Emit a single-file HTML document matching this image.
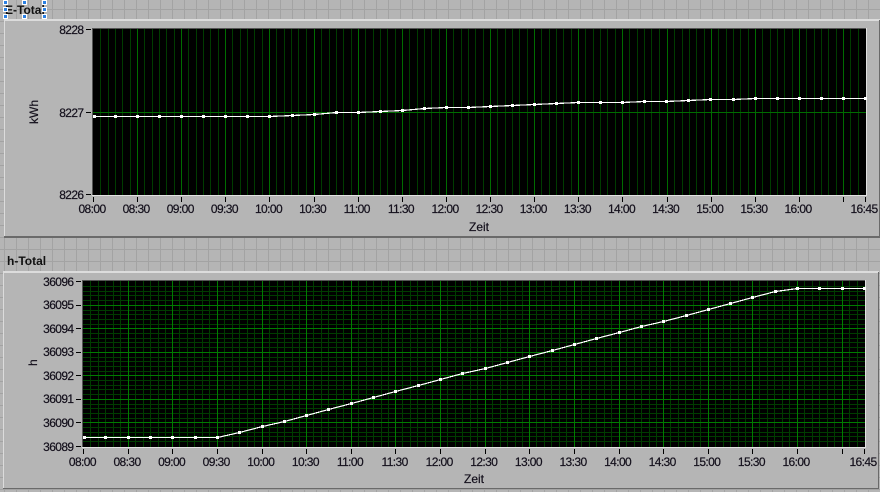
<!DOCTYPE html>
<html><head><meta charset="utf-8"><title>E-Total / h-Total</title>
<style>
html,body{margin:0;padding:0;width:880px;height:492px;overflow:hidden;background:#b5b5b5}
svg{display:block}
text{font-family:"Liberation Sans",sans-serif;font-size:12px;letter-spacing:-.6px;fill:#14101c;stroke:#14101c;stroke-width:.2px}
.z{letter-spacing:0}
.b{font-weight:bold;font-size:12px;letter-spacing:0;fill:#111;stroke:none}
.m{text-anchor:middle}.e{text-anchor:end}
.c{shape-rendering:crispEdges}
</style></head><body>
<svg width="880" height="492" viewBox="0 0 880 492" xmlns="http://www.w3.org/2000/svg">
<defs>
<pattern id="bg" width="12" height="12" patternUnits="userSpaceOnUse" x="4" y="9">
<rect width="12" height="12" fill="#b5b5b5"/><path d="M.5 0V12M0 .5H12" stroke="#a3a3a3" fill="none"/>
</pattern>
<path id="v1" class="c" fill="none" stroke="#003c00" d="M7.5 29V195M15.5 29V195M22.5 29V195M29.5 29V195M37.5 29V195"/>
<path id="v2" class="c" fill="none" stroke="#003c00" d="M7.5 281V447M15.5 281V447M22.5 281V447M30.5 281V447M37.5 281V447"/>
</defs>
<rect width="880" height="492" fill="url(#bg)"/>

<!-- top panel -->
<g class="c">
<rect x="4" y="19" width="876" height="218" fill="#b5b5b5"/>
<rect x="4" y="19" width="876" height="2" fill="#dcdcdc"/>
<rect x="4" y="19" width="1" height="218" fill="#dcdcdc"/>
<rect x="4" y="236" width="876" height="2" fill="#6a6a6a"/>
<rect x="879" y="20" width="1" height="218" fill="#6a6a6a"/>
<rect x="92" y="28" width="775" height="168" fill="#e2e2e2"/>
<rect x="92" y="28" width="774" height="167" fill="#555"/>
<rect x="93" y="29" width="773" height="166" fill="#000"/>
</g>
<use href="#v1" x="93"/><use href="#v1" x="137"/><use href="#v1" x="181"/><use href="#v1" x="225"/><use href="#v1" x="269"/><use href="#v1" x="314"/><use href="#v1" x="358"/><use href="#v1" x="402"/><use href="#v1" x="446"/><use href="#v1" x="490"/><use href="#v1" x="534"/><use href="#v1" x="578"/><use href="#v1" x="622"/><use href="#v1" x="667"/><use href="#v1" x="711"/><use href="#v1" x="755"/><use href="#v1" x="799"/>
<path class="c" fill="none" stroke="#003c00" d="M850.5 29V195M858.5 29V195"/>
<path class="c" fill="none" stroke="#006c00" d="M137.5 29V195M181.5 29V195M225.5 29V195M269.5 29V195M314.5 29V195M358.5 29V195M402.5 29V195M446.5 29V195M490.5 29V195M534.5 29V195M578.5 29V195M622.5 29V195M667.5 29V195M711.5 29V195M755.5 29V195M799.5 29V195M843.5 29V195M93 112.5H866"/>
<polyline class="c" fill="none" stroke="#fff" stroke-width="1.2" points="94.5,116.5 269.5,116.5 292.5,115.5 314.5,114.5 336.5,112.5 358.5,112.5 380.5,111.5 402.5,110.5 424.5,108.5 446.5,107.5 468.5,107.5 490.5,106.5 512.5,105.5 534.5,104.5 556.5,103.5 578.5,102.5 622.5,102.5 644.5,101.5 666.5,101.5 688.5,100.5 710.5,99.5 733.5,99.5 755.5,98.5 865.5,98.5"/>
<path class="c" fill="none" stroke="#fff" stroke-width="3" stroke-linecap="square" d="M94.5 116.5h.01M115.5 116.5h.01M137.5 116.5h.01M159.5 116.5h.01M181.5 116.5h.01M203.5 116.5h.01M225.5 116.5h.01M247.5 116.5h.01M269.5 116.5h.01M292.5 115.5h.01M314.5 114.5h.01M336.5 112.5h.01M358.5 112.5h.01M380.5 111.5h.01M402.5 110.5h.01M424.5 108.5h.01M446.5 107.5h.01M468.5 107.5h.01M490.5 106.5h.01M512.5 105.5h.01M534.5 104.5h.01M556.5 103.5h.01M578.5 102.5h.01M600.5 102.5h.01M622.5 102.5h.01M644.5 101.5h.01M666.5 101.5h.01M688.5 100.5h.01M710.5 99.5h.01M733.5 99.5h.01M755.5 98.5h.01M777.5 98.5h.01M799.5 98.5h.01M821.5 98.5h.01M843.5 98.5h.01M865.5 98.5h.01"/>
<!-- top ticks -->
<path class="c" fill="none" stroke="#000" d="M86 29.5H91M86 112.5H91M86 194.5H91M93.5 197V202M137.5 197V202M181.5 197V202M225.5 197V202M269.5 197V202M314.5 197V202M358.5 197V202M402.5 197V202M446.5 197V202M490.5 197V202M534.5 197V202M578.5 197V202M622.5 197V202M667.5 197V202M711.5 197V202M755.5 197V202M799.5 197V202M843.5 197V202M865.5 197V202"/>
<text class="e" x="83.5" y="34">8228</text>
<text class="e" x="83.5" y="117">8227</text>
<text class="e" x="83.5" y="199">8226</text>
<text class="m z" transform="translate(38 112) rotate(-90)">kWh</text>
<text class="m" x="92" y="213">08:00</text><text class="m" x="136.1" y="213">08:30</text><text class="m" x="180.25" y="213">09:00</text><text class="m" x="224.4" y="213">09:30</text><text class="m" x="268.5" y="213">10:00</text><text class="m" x="312.6" y="213">10:30</text><text class="m" x="356.75" y="213">11:00</text><text class="m" x="400.9" y="213">11:30</text><text class="m" x="445" y="213">12:00</text><text class="m" x="489.1" y="213">12:30</text><text class="m" x="533.25" y="213">13:00</text><text class="m" x="577.4" y="213">13:30</text><text class="m" x="621.5" y="213">14:00</text><text class="m" x="665.6" y="213">14:30</text><text class="m" x="709.75" y="213">15:00</text><text class="m" x="753.9" y="213">15:30</text><text class="m" x="798" y="213">16:00</text><text class="m" x="864" y="213">16:45</text>
<text class="m z" x="479" y="231">Zeit</text>

<!-- bottom panel -->
<text class="b" x="7" y="265">h-Total</text>
<g class="c">
<rect x="3" y="271" width="876" height="218" fill="#b5b5b5"/>
<rect x="3" y="271" width="876" height="2" fill="#dcdcdc"/>
<rect x="3" y="271" width="1" height="218" fill="#dcdcdc"/>
<rect x="3" y="488" width="876" height="1" fill="#6a6a6a"/>
<rect x="878" y="272" width="1" height="217" fill="#6a6a6a"/>
<rect x="82" y="280" width="784" height="168" fill="#e2e2e2"/>
<rect x="82" y="280" width="783" height="167" fill="#555"/>
<rect x="83" y="281" width="782" height="166" fill="#000"/>
</g>
<use href="#v2" x="83"/><use href="#v2" x="128"/><use href="#v2" x="172"/><use href="#v2" x="217"/><use href="#v2" x="262"/><use href="#v2" x="306"/><use href="#v2" x="351"/><use href="#v2" x="395"/><use href="#v2" x="440"/><use href="#v2" x="485"/><use href="#v2" x="529"/><use href="#v2" x="574"/><use href="#v2" x="619"/><use href="#v2" x="663"/><use href="#v2" x="708"/><use href="#v2" x="752"/><use href="#v2" x="797"/>
<path class="c" fill="none" stroke="#003c00" d="M849.5 281V447M857.5 281V447M83 286.5H865M83 291.5H865M83 295.5H865M83 300.5H865M83 310.5H865M83 314.5H865M83 319.5H865M83 324.5H865M83 333.5H865M83 338.5H865M83 342.5H865M83 347.5H865M83 357.5H865M83 361.5H865M83 366.5H865M83 371.5H865M83 380.5H865M83 385.5H865M83 389.5H865M83 394.5H865M83 404.5H865M83 408.5H865M83 413.5H865M83 418.5H865M83 427.5H865M83 432.5H865M83 436.5H865M83 441.5H865"/>
<path class="c" fill="none" stroke="#007c00" d="M128.5 281V447M172.5 281V447M217.5 281V447M262.5 281V447M306.5 281V447M351.5 281V447M395.5 281V447M440.5 281V447M485.5 281V447M529.5 281V447M574.5 281V447M619.5 281V447M663.5 281V447M708.5 281V447M752.5 281V447M797.5 281V447M842.5 281V447M83 305.5H865M83 328.5H865M83 352.5H865M83 375.5H865M83 399.5H865M83 422.5H865"/>
<polyline class="c" fill="none" stroke="#fff" stroke-width="1.2" points="83.5,437.5 217.5,437.5 239.5,432.5 262.5,426.5 284.5,421.5 306.5,415.5 328.5,409.5 351.5,403.5 373.5,397.5 395.5,391.5 418.5,385.5 440.5,379.5 462.5,373.5 485.5,368.5 507.5,362.5 529.5,356.5 552.5,350.5 574.5,344.5 596.5,338.5 619.5,332.5 641.5,326.5 663.5,321.5 686.5,315.5 708.5,309.5 730.5,303.5 752.5,297.5 775.5,291.5 797.5,288.5 864.5,288.5"/>
<path class="c" fill="none" stroke="#fff" stroke-width="3" stroke-linecap="square" d="M84.5 437.5h.01M105.5 437.5h.01M128.5 437.5h.01M150.5 437.5h.01M172.5 437.5h.01M195.5 437.5h.01M217.5 437.5h.01M239.5 432.5h.01M262.5 426.5h.01M284.5 421.5h.01M306.5 415.5h.01M328.5 409.5h.01M351.5 403.5h.01M373.5 397.5h.01M395.5 391.5h.01M418.5 385.5h.01M440.5 379.5h.01M462.5 373.5h.01M485.5 368.5h.01M507.5 362.5h.01M529.5 356.5h.01M552.5 350.5h.01M574.5 344.5h.01M596.5 338.5h.01M619.5 332.5h.01M641.5 326.5h.01M663.5 321.5h.01M686.5 315.5h.01M708.5 309.5h.01M730.5 303.5h.01M752.5 297.5h.01M775.5 291.5h.01M797.5 288.5h.01M819.5 288.5h.01M842.5 288.5h.01M864.5 288.5h.01"/>
<path class="c" fill="none" stroke="#000" d="M76 281.5H81M76 305.5H81M76 328.5H81M76 352.5H81M76 375.5H81M76 399.5H81M76 422.5H81M76 446.5H81M83.5 449V454M128.5 449V454M172.5 449V454M217.5 449V454M262.5 449V454M306.5 449V454M351.5 449V454M395.5 449V454M440.5 449V454M485.5 449V454M529.5 449V454M574.5 449V454M619.5 449V454M663.5 449V454M708.5 449V454M752.5 449V454M797.5 449V454M842.5 449V454M864.5 449V454"/>
<text class="e" x="73.5" y="286">36096</text>
<text class="e" x="73.5" y="309">36095</text>
<text class="e" x="73.5" y="333">36094</text>
<text class="e" x="73.5" y="356">36093</text>
<text class="e" x="73.5" y="380">36092</text>
<text class="e" x="73.5" y="403">36091</text>
<text class="e" x="73.5" y="427">36090</text>
<text class="e" x="73.5" y="451">36089</text>
<text class="m" transform="translate(37 363) rotate(-90)">h</text>
<text class="m" x="82.4" y="466">08:00</text><text class="m" x="127" y="466">08:30</text><text class="m" x="171.6" y="466">09:00</text><text class="m" x="216.2" y="466">09:30</text><text class="m" x="260.8" y="466">10:00</text><text class="m" x="305.4" y="466">10:30</text><text class="m" x="350" y="466">11:00</text><text class="m" x="394.6" y="466">11:30</text><text class="m" x="439.2" y="466">12:00</text><text class="m" x="483.8" y="466">12:30</text><text class="m" x="528.4" y="466">13:00</text><text class="m" x="573" y="466">13:30</text><text class="m" x="617.6" y="466">14:00</text><text class="m" x="662.2" y="466">14:30</text><text class="m" x="706.8" y="466">15:00</text><text class="m" x="751.4" y="466">15:30</text><text class="m" x="796" y="466">16:00</text><text class="m" x="863" y="466">16:45</text>
<text class="m z" x="474" y="483">Zeit</text>

<!-- selected label -->
<text class="b" x="5" y="14">E-Total</text>
<g class="c" fill="#2a80e4" stroke="#fff">
<rect x="3.5" y=".5" width="4" height="4"/><rect x="22.5" y=".5" width="4" height="4"/><rect x="42.5" y=".5" width="4" height="4"/>
<rect x="3.5" y="7.5" width="4" height="4"/><rect x="42.5" y="7.5" width="4" height="4"/>
<rect x="3.5" y="14.5" width="4" height="4"/><rect x="22.5" y="14.5" width="4" height="4"/><rect x="42.5" y="14.5" width="4" height="4"/>
</g>
</svg>
</body></html>
